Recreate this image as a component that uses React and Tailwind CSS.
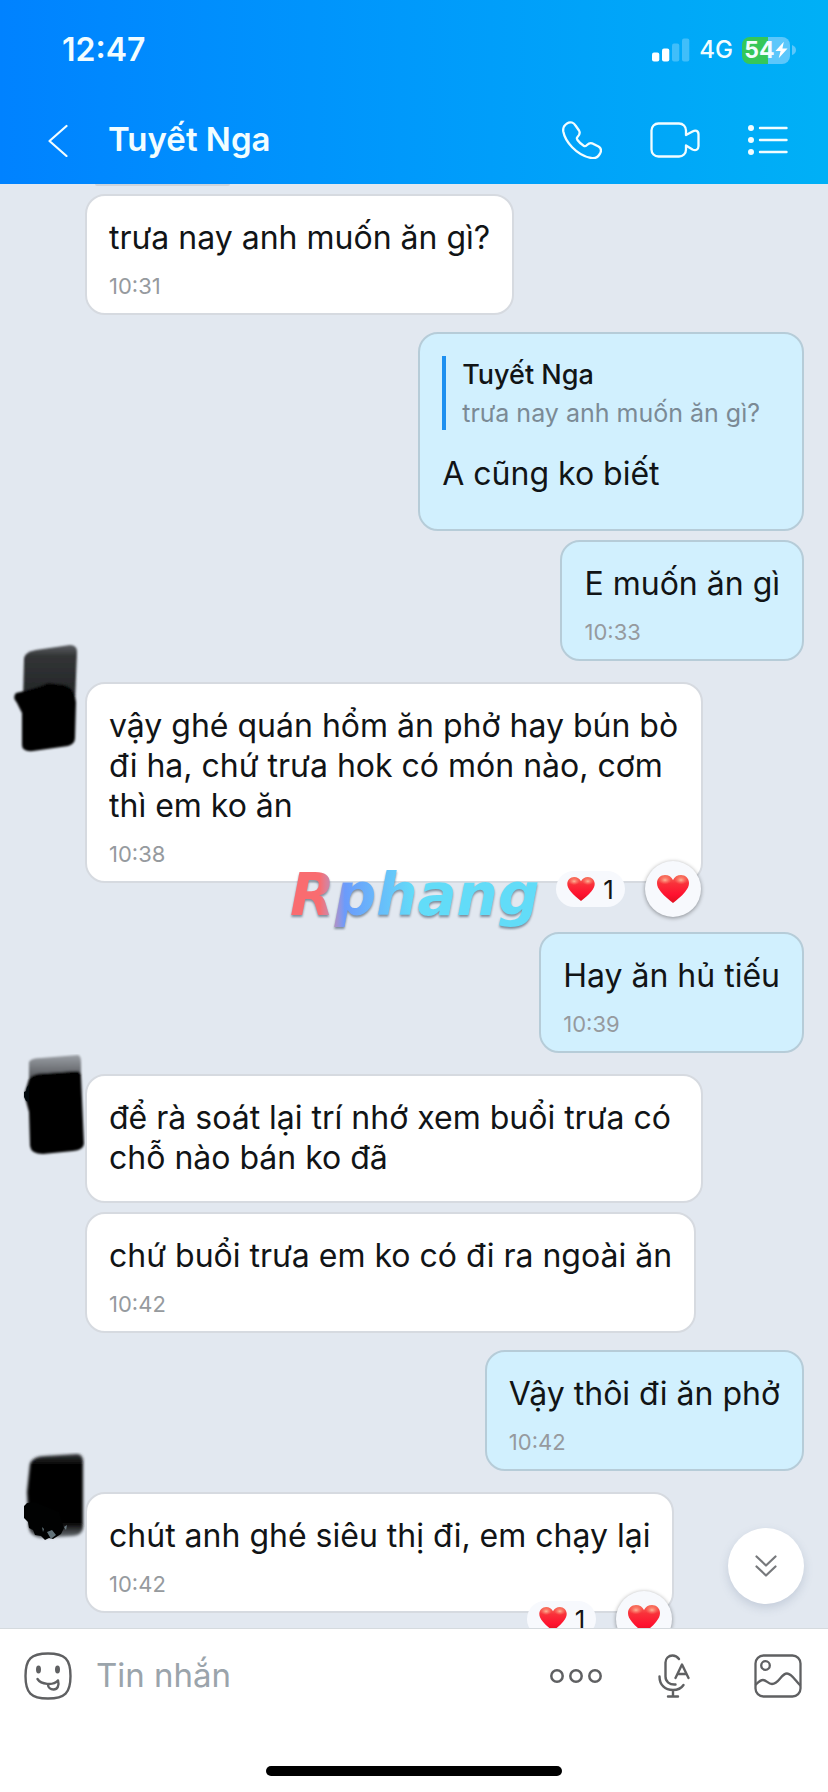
import React from 'react';

function Heart({ className }) {
  return (
    <svg viewBox="0 0 32 28" className={className} aria-hidden="true">
      <defs>
        <linearGradient id="heartBody" x1="0" y1="0" x2="0" y2="1">
          <stop offset="0" stopColor="#f6705c" />
          <stop offset="0.3" stopColor="#f9313a" />
          <stop offset="0.7" stopColor="#ff1230" />
          <stop offset="1" stopColor="#e0101f" />
        </linearGradient>
        <radialGradient id="heartShine">
          <stop offset="0" stopColor="#ffc9a8" stopOpacity="0.85" />
          <stop offset="1" stopColor="#ff8a70" stopOpacity="0" />
        </radialGradient>
      </defs>
      <path
        d="M16 28C12.5 25 7.5 21.5 4 17C1.300 13.500 0 11.200 0 8C0 3.500 3.500 0 8 0C11.700 0 14.600 1.900 16 5C17.400 1.900 20.300 0 24 0C28.500 0 32 3.500 32 8C32 11.200 30.700 13.500 28 17C24.500 21.500 19.500 25 16 28Z"
        fill="url(#heartBody)"
      />
      <ellipse cx="8" cy="5" rx="6.500" ry="4.500" fill="url(#heartShine)" />
      <ellipse cx="24" cy="5" rx="6.500" ry="4.500" fill="url(#heartShine)" />
    </svg>
  );
}

function Reactions() {
  return (
    <div className="absolute right-0 -bottom-9 flex items-center gap-5">
      <div className="flex h-9 w-[69px] items-center justify-center gap-2 rounded-full bg-[#f7f9fd] text-[26px] text-[#141414]">
        <Heart className="h-6 w-7" />
        <span>1</span>
      </div>
      <button
        type="button"
        aria-label="Thả tim"
        className="flex size-14 items-center justify-center rounded-full bg-[#f7f9fd] shadow-[0_1px_4px_rgba(0,0,0,0.4)]"
      >
        <Heart className="h-7 w-8" />
      </button>
    </div>
  );
}

function AvatarOne() {
  return (
    <svg viewBox="0 0 72 116" className="absolute left-2 -top-10 h-[116px] w-[72px]" aria-hidden="true">
      <defs>
        <filter id="softOne" x="-10%" y="-10%" width="120%" height="120%">
          <feGaussianBlur stdDeviation="1.300" />
        </filter>
        <linearGradient id="fadeOne" x1="0" y1="0" x2="0" y2="1">
          <stop offset="0" stopColor="#5b5e62" />
          <stop offset="0.2" stopColor="#323436" />
          <stop offset="1" stopColor="#222426" />
        </linearGradient>
      </defs>
      <g filter="url(#softOne)">
        <path d="M16 16Q17 10 28 8L62 3Q69 3 69 10L67 60H15Z" fill="url(#fadeOne)" />
        <path
          d="M8 51Q4 55 9 61L14 71V103Q14 110 25 109L60 104Q67 102 67 96L68 60Q66 45 56 43L40 41Q30 46 8 51Z"
          fill="#000"
        />
      </g>
    </svg>
  );
}

function AvatarTwo() {
  return (
    <svg viewBox="0 0 64 104" className="absolute left-[23px] -top-5 h-[104px] w-16" aria-hidden="true">
      <defs>
        <filter id="softTwo" x="-10%" y="-10%" width="120%" height="120%">
          <feGaussianBlur stdDeviation="1.300" />
        </filter>
        <linearGradient id="fadeTwo" x1="0" y1="0" x2="0" y2="1">
          <stop offset="0" stopColor="#9b9fa5" />
          <stop offset="1" stopColor="#55585c" />
        </linearGradient>
      </defs>
      <g filter="url(#softTwo)">
        <path d="M6 8Q8 4 18 4L55 1Q58 2 58 8V24H6Z" fill="url(#fadeTwo)" />
        <path d="M6 25Q9 19 25 19L53 17Q58 17 58 22L61 90Q60 96 50 97L20 100Q8 100 7 92L6 58L2 43L2 38Z" fill="#000" />
      </g>
      <path d="M4 33L6 31V48L3 47L1 43V38L3 37Z" fill="#02090d" />
    </svg>
  );
}

function AvatarThree() {
  return (
    <svg viewBox="0 0 64 92" className="absolute left-[23px] -top-10 h-[92px] w-16" aria-hidden="true">
      <defs>
        <filter id="softThree" x="-10%" y="-10%" width="120%" height="120%">
          <feGaussianBlur stdDeviation="1.500" />
        </filter>
        <linearGradient id="fadeThree" x1="0" y1="0" x2="0" y2="1">
          <stop offset="0" stopColor="#333538" />
          <stop offset="0.12" stopColor="#050506" />
          <stop offset="0.82" stopColor="#000" />
          <stop offset="1" stopColor="#71777c" />
        </linearGradient>
      </defs>
      <path
        d="M7 12Q10 4 22 4L54 2Q60 2 60 10V76Q59 83 50 84L18 86Q7 84 6 76L4 40Z"
        fill="url(#fadeThree)"
        filter="url(#softThree)"
      />
      <path d="M4 51L1 54V66L5 70L6 76L10 78L12 83L18 84L22 88L26 86L30 87L38 82L41 76L36 60L12 50Z" fill="#010202" />
      <path d="M24 80L29 78L33 83L28 87ZM19 75L21 77L20 80ZM41 75L44 73L43 78Z" fill="#8ba3ad" opacity="0.7" />
    </svg>
  );
}

const SIDE = {
  in: 'self-start ml-[85px] bg-white border-[#d6dae0]',
  out: 'self-end mr-6 bg-[#d1f0fe] border-[#b6ccd8]',
};

function Message({ side, text, time, quote, avatar, reacted, spacing = '' }) {
  return (
    <article className={`relative flex flex-col ${spacing}`}>
      {avatar}
      <div className={`relative max-w-[618px] rounded-[20px] border-2 px-[22px] pt-[22px] ${time ? 'pb-[14px]' : quote ? 'pb-[35px]' : 'pb-[23px]'} ${SIDE[side]}`}>
        {quote && (
          <blockquote className="mb-6 flex h-[74px] flex-col justify-center border-l-4 border-[#1e90f0] pr-5 pl-4">
            <cite className="text-[27px] leading-10 font-medium not-italic">{quote.author}</cite>
            <span className="text-[25px] leading-9 text-[#7b8a95]">{quote.text}</span>
          </blockquote>
        )}
        <p className="text-[32px] leading-10">{text}</p>
        {time && <time className="mt-[15px] block text-[22px] leading-[26px] text-[#969a9e]">{time}</time>}
        {reacted && <Reactions />}
      </div>
    </article>
  );
}

function StatusBar() {
  return (
    <div className="flex h-[100px] items-center justify-between pr-8 pl-[62px]">
      <span className="text-[32px] font-semibold">12:47</span>
      <div className="flex items-center gap-[9px]">
        <svg viewBox="0 0 38 24" className="h-6 w-[38px]" fill="#fff" aria-hidden="true">
          <rect x="0" y="14.500" width="7.300" height="9" rx="2" />
          <rect x="10" y="10.500" width="7.300" height="13" rx="2" />
          <rect x="20" y="5.500" width="7.300" height="18" rx="2" opacity="0.25" />
          <rect x="30" y="0.500" width="7.300" height="23" rx="2" opacity="0.25" />
        </svg>
        <span className="text-2xl font-medium">4G</span>
        <div className="flex items-center gap-0.5">
          <div className="flex h-[27px] w-12 items-center justify-center rounded-lg bg-linear-to-r from-[#35c759] from-54% to-[#5cc7fb] to-54% text-[23px] font-bold">
            54
            <svg viewBox="0 0 14 18" className="h-[18px] w-[13px]" fill="#fff" aria-hidden="true">
              <path d="M9.500 0L0.500 10H6L4 18L13.500 7.500H8Z" />
            </svg>
          </div>
          <svg viewBox="0 0 4 10" className="h-[10px] w-1" aria-hidden="true">
            <path d="M0 0Q4 1.500 4 5Q4 8.500 0 10Z" fill="#5cc7fb" />
          </svg>
        </div>
      </div>
    </div>
  );
}

function Header() {
  return (
    <header className="h-[184px] shrink-0 bg-linear-to-r from-[#0082ff] to-[#00b0f6] text-[#f2fdff]">
      <StatusBar />
      <div className="flex h-20 items-center pr-10 pl-12">
        <button type="button" aria-label="Quay lại" className="mr-10">
          <svg viewBox="0 0 20 34" className="h-[34px] w-5" fill="none" stroke="currentColor" strokeWidth="2.200" strokeLinecap="round" strokeLinejoin="round">
            <path d="M18.500 3L1.500 18L18.500 33" />
          </svg>
        </button>
        <h1 className="flex-1 text-[33px] font-semibold">Tuyết Nga</h1>
        <div className="flex items-center gap-12">
          <button type="button" aria-label="Gọi điện">
            <svg viewBox="0 0 40 38" className="h-[38px] w-10" fill="none" stroke="currentColor" strokeWidth="2.300" strokeLinejoin="round">
              <path d="M2 5.500C4 2.500 7 0.800 10 1.500C11.500 1.900 12.500 3 13.500 4.500L17 9.500C18.500 12 18 13.500 15.500 16C14.500 17 14.800 18 15.500 19C17.500 21.800 19.500 23.500 22 25C23 25.500 24 25 25 24C27 22 28 21.600 30 22.300L36.500 25.500C39 27 39.500 29 38.500 31.500C37 35 34 38 29 37C14 34 3 20 1.300 10.500C1 8.500 1.200 7 2 5.500Z" />
            </svg>
          </button>
          <button type="button" aria-label="Gọi video">
            <svg viewBox="0 0 50 36" className="h-9 w-[50px]" fill="none" stroke="currentColor" strokeWidth="2.300" strokeLinejoin="round">
              <path d="M36 13V8.500C36 4.500 33 1.500 29 1.500H8.500C4.500 1.500 1.500 4.500 1.500 8.500V27.500C1.500 31.500 4.500 34.500 8.500 34.500H29C33 34.500 36 31.500 36 27.500V23.500L42.500 27.500C45.500 29 48.500 28 48.500 24V12.500C48.500 8.500 45.500 7.800 42.500 9.500Z" />
            </svg>
          </button>
          <button type="button" aria-label="Tùy chọn">
            <svg viewBox="0 0 40 32" className="h-8 w-10" aria-hidden="true">
              <g fill="currentColor">
                <circle cx="3" cy="4" r="3" />
                <circle cx="3" cy="16" r="3" />
                <circle cx="3" cy="28" r="3" />
              </g>
              <path d="M12 4H38.500M12 16H38.500M12 28H38.500" stroke="currentColor" strokeWidth="2.400" strokeLinecap="round" />
            </svg>
          </button>
        </div>
      </div>
    </header>
  );
}

function Composer() {
  return (
    <footer className="flex h-[164px] shrink-0 flex-col justify-between border-t border-[#d5dade] bg-white">
      <form className="flex h-[94px] items-center pr-[26px] pl-6 text-[#5f6062]" onSubmit={(e) => e.preventDefault()}>
        <button type="button" aria-label="Biểu cảm">
          <svg viewBox="0 0 48 48" className="size-12" fill="none" stroke="currentColor" strokeWidth="2.400" strokeLinecap="round" strokeLinejoin="round">
            <path d="M24 1.500C41 1.500 46.500 7 46.500 24S41 46.500 24 46.500S1.500 41 1.500 24S7 1.500 24 1.500Z" />
            <ellipse cx="14.500" cy="17.500" rx="2.500" ry="4" fill="currentColor" stroke="none" />
            <ellipse cx="33.500" cy="17.500" rx="2.500" ry="4" fill="currentColor" stroke="none" />
            <path d="M13.500 27C17 32.500 29 34 34 28.500M24 32.500C24 35.500 26.500 37.500 29.500 37.500C33.500 37.500 35.500 33.500 34 28.500" />
          </svg>
        </button>
        <input
          type="text"
          aria-label="Tin nhắn"
          placeholder="Tin nhắn"
          className="ml-6 min-w-0 flex-1 text-[33px] text-[#141414] outline-none placeholder:text-[#9ba4ab]"
        />
        <button type="button" aria-label="Thêm" className="mr-14">
          <svg viewBox="0 0 52 14" className="h-[14px] w-[52px]" fill="none" stroke="currentColor" strokeWidth="2.500">
            <circle cx="7" cy="7" r="5.700" />
            <circle cx="26" cy="7" r="5.700" />
            <circle cx="45" cy="7" r="5.700" />
          </svg>
        </button>
        <button type="button" aria-label="Ghi âm" className="mr-16">
          <svg viewBox="0 0 32 44" className="h-11 w-8" fill="none" stroke="currentColor" strokeWidth="2.400" strokeLinecap="round" strokeLinejoin="round">
            <path d="M21 5C19 2.300 17 1.500 14.500 1.500C10.500 1.500 7.500 4.500 7.500 8.500V22.500C7.500 27.500 11.500 31 17.500 30.500" />
            <path d="M1.500 22.500C1.500 31 7 36 15 36C20 36 23.500 34 25.500 31M15 36V42.500M10 42.500H20" />
            <path d="M17.500 24L24 10.500L30.500 24M20 20H28.500" />
          </svg>
        </button>
        <button type="button" aria-label="Gửi ảnh">
          <svg viewBox="0 0 48 44" className="h-11 w-12" fill="none" stroke="currentColor" strokeWidth="2.300" strokeLinejoin="round">
            <rect x="1.500" y="1.500" width="45" height="41" rx="8" />
            <circle cx="11.500" cy="11.500" r="4.300" />
            <path d="M1.500 31C4 28.500 6 26 9 26C12.500 26 14 30 18 30C25 30 27 19.500 33 19.500C38 19.500 42 28 46.500 31.500" />
          </svg>
        </button>
      </form>
      <div className="mb-4 h-[10px] w-[296px] self-center rounded-full bg-black" />
    </footer>
  );
}

export default function App() {
  return (
    <div className="flex h-screen flex-col overflow-hidden bg-[#e2e8f0] font-['Inter','Liberation_Sans',sans-serif] text-[#111416]">
      <Header />
      <main className="relative flex min-h-0 flex-1 flex-col overflow-hidden">
        <div className="mb-2 ml-[95px] h-0.5 w-[135px] shrink-0 rounded-b-full bg-[#ced4dc]" />
        <Message side="in" text="trưa nay anh muốn ăn gì?" time="10:31" />
        <Message
          side="out"
          spacing="mt-[17px]"
          quote={{ author: 'Tuyết Nga', text: 'trưa nay anh muốn ăn gì?' }}
          text="A cũng ko biết"
        />
        <Message side="out" spacing="mt-[9px]" text="E muốn ăn gì" time="10:33" />
        <div className="relative mt-[21px]">
          <Message
            side="in"
            avatar={<AvatarOne />}
            text="vậy ghé quán hổm ăn phở hay bún bò đi ha, chứ trưa hok có món nào, cơm thì em ko ăn"
            time="10:38"
            reacted
          />
          <span className="absolute -bottom-12 left-[290px] bg-linear-to-r from-[#f96c70] from-12% via-[#6b9bfb] via-22% to-[#62dcf8] to-50% bg-clip-text font-['DejaVu_Sans'] text-[58px] leading-[72px] font-bold text-transparent italic drop-shadow-[0_2px_1px_rgba(60,80,100,0.6)]">
            Rphang
          </span>
        </div>
        <Message side="out" spacing="mt-[49px]" text="Hay ăn hủ tiếu" time="10:39" />
        <Message
          side="in"
          spacing="mt-[21px]"
          avatar={<AvatarTwo />}
          text="để rà soát lại trí nhớ xem buổi trưa có chỗ nào bán ko đã"
        />
        <Message side="in" spacing="mt-[9px]" text="chứ buổi trưa em ko có đi ra ngoài ăn" time="10:42" />
        <Message side="out" spacing="mt-[17px]" text="Vậy thôi đi ăn phở" time="10:42" />
        <Message
          side="in"
          spacing="mt-[21px]"
          avatar={<AvatarThree />}
          text="chút anh ghé siêu thị đi, em chạy lại"
          time="10:42"
          reacted
        />
        <button
          type="button"
          aria-label="Xuống cuối"
          className="absolute right-6 bottom-6 flex size-[76px] items-center justify-center rounded-full bg-white text-[#77797c] shadow-[0_4px_10px_rgba(90,110,140,0.22)]"
        >
          <svg viewBox="0 0 22 22" className="size-[22px]" fill="none" stroke="currentColor" strokeWidth="2.200" strokeLinecap="round" strokeLinejoin="round">
            <path d="M1.500 1.500L11 10.500L20.500 1.500M1.500 11.500L11 20.500L20.500 11.500" />
          </svg>
        </button>
      </main>
      <Composer />
    </div>
  );
}
